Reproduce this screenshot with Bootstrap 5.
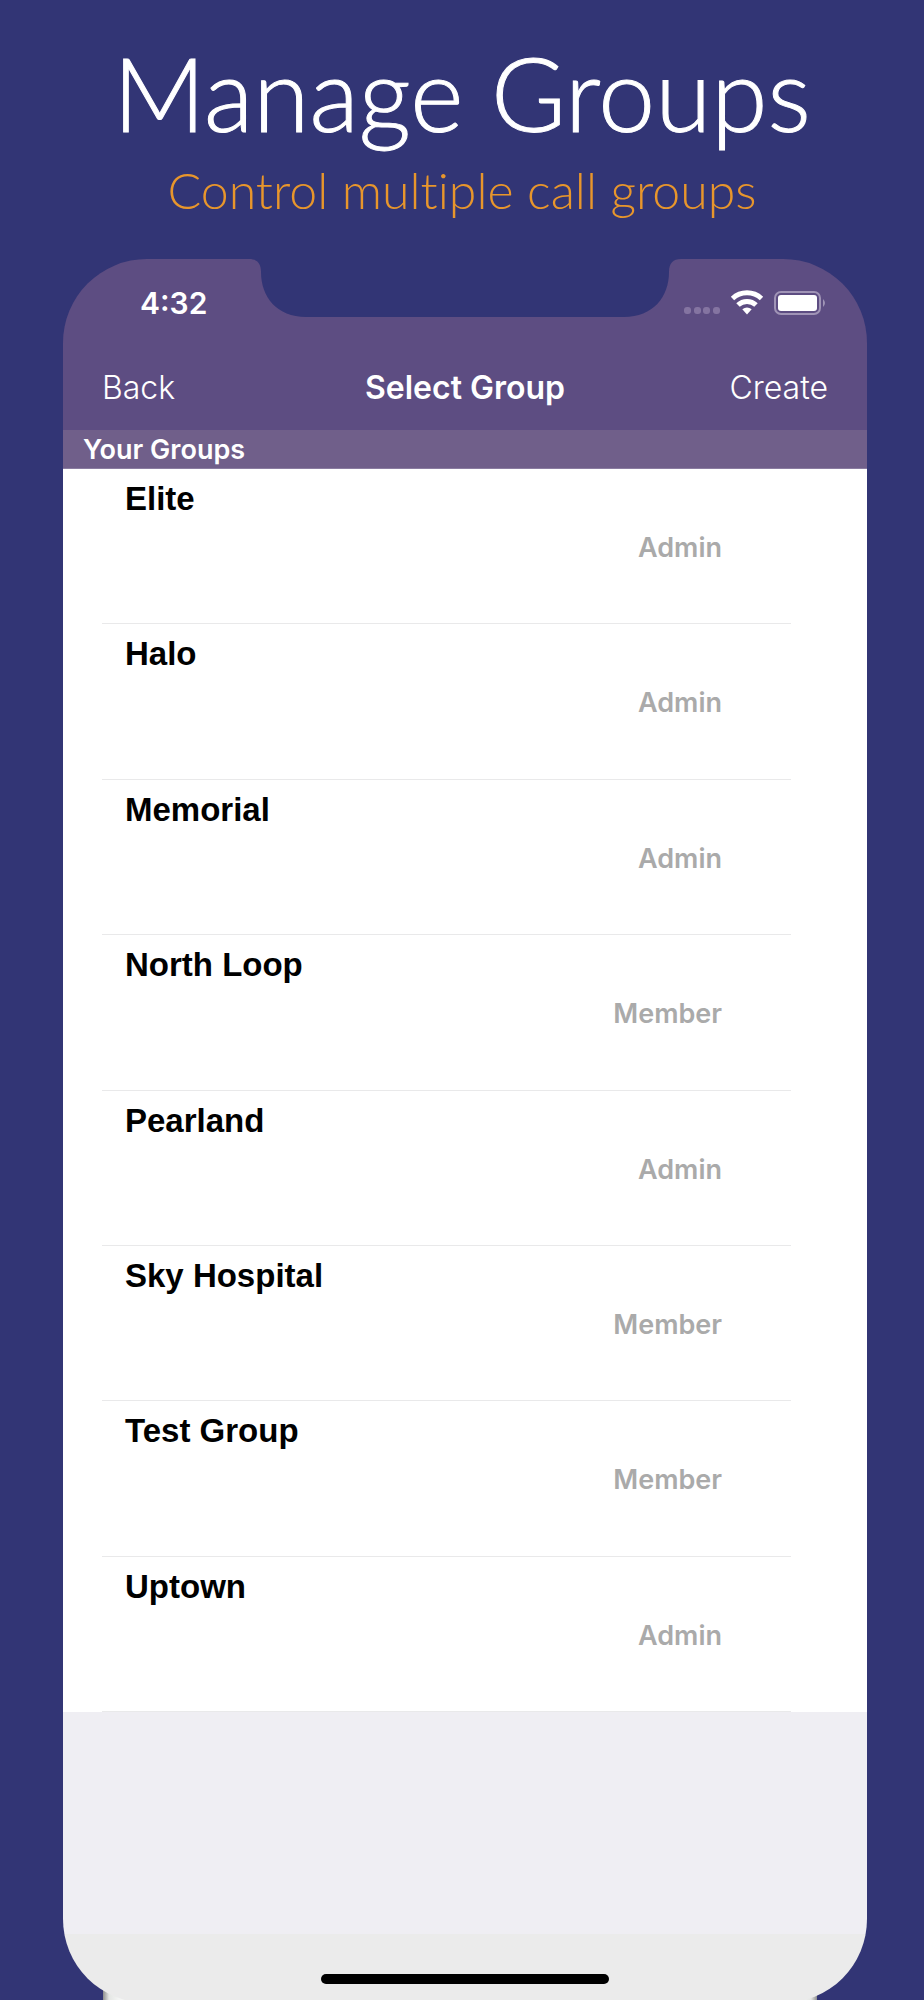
<!DOCTYPE html>
<html lang="en">
<head>
<meta charset="utf-8">
<meta name="viewport" content="width=device-width, initial-scale=1">
<title>Manage Groups</title>
<link href="https://cdn.jsdelivr.net/npm/bootstrap@5.3.0/dist/css/bootstrap.min.css" rel="stylesheet">
<style>
  body { background: #323575; font-family: Inter, "Liberation Sans", sans-serif; }
  .promo { padding-top: 29px; height: 259px; font-family: Lato, "Open Sans", sans-serif; font-weight: 300; font-variant-ligatures: none; }
  .promo h1 { font-size: 102px; line-height: 128px; font-weight: 300; color: #fff; -webkit-text-stroke: 1px #fff; }
  .promo p { font-size: 50px; line-height: 66px; color: #e8962c; }
  .stage { padding: 0 57px 0 63px; overflow: hidden; }
  .phone { border-radius: 84px; overflow: hidden; margin-bottom: -3px; }
  .phone-base { left: 103px; right: 107px; bottom: 0; height: 10px; background: linear-gradient(90deg, #8e8e8e, #e4e6e4 6px, #f4f5f4 16px, #f4f5f4 calc(100% - 16px), #e4e6e4 calc(100% - 6px), #8e8e8e); }
  .app-top { background: #5d4d82; color: #fff; }
  .notch { top: 0; left: 50%; transform: translateX(-50%); }
  .status { height: 88px; padding: 0 41px 0 77px; font-size: 30px; font-weight: 600; }
  .title-bar { height: 83px; padding: 0 39px 2px; }
  .title-bar .btn { font-size: 32px; line-height: 40px; color: #fff; font-weight: 300; }
  .title-bar h2 { font-size: 32px; line-height: 40px; font-weight: 600; }
  .section-label { background: #705f8a; color: #fff; font-size: 27px; line-height: 39px; font-weight: 600; padding-left: 20px; border-bottom: 1px solid #8a7ca0; height: 39px; }
  .groups { display: grid; grid-auto-rows: 1fr; min-height: 1243px; padding: 0 76px 0 39px; background: #fff; }
  .groups li { border-bottom: 1px solid #e9e9ea; padding: 10px 69px 0 23px; }
  .group-name { font-family: "Liberation Sans", Arial, sans-serif; font-size: 33px; line-height: 40px; font-weight: 700; color: #000; }
  .group-role { font-size: 27px; line-height: 32px; font-weight: 600; color: #aaa; margin-top: 13px; }
  .blank { height: 222px; background: #efeef3; }
  .home { height: 69px; background: #ebebeb; padding-top: 40px; }
  .home span { width: 288px; height: 10px; border-radius: 5px; background: #000; }
</style>
</head>
<body>
<header class="promo text-center">
  <h1 class="m-0">Manage Groups</h1>
  <p class="m-0">Control multiple call groups</p>
</header>
<main class="stage position-relative">
  <div class="phone-base position-absolute"></div>
  <div class="phone position-relative">
    <div class="app-top position-relative">
      <svg class="notch position-absolute" width="432" height="58" viewBox="0 0 432 58" aria-hidden="true"><path fill="#323575" d="M0 0C8 0 12 4 12 13C12 38 28 58 57 58H375C404 58 420 38 420 13C420 4 424 0 432 0Z"/></svg>
      <div class="status d-flex justify-content-between align-items-center">
        <span>4:32</span>
        <svg width="142" height="26" viewBox="0 0 142 26" aria-hidden="true">
          <g fill="#8474a1"><rect x="0" y="17" width="7" height="7" rx="3"/><rect x="10" y="17" width="7" height="7" rx="3"/><rect x="19" y="17" width="7" height="7" rx="3"/><rect x="29" y="17" width="7" height="7" rx="3"/></g>
          <g fill="none" stroke="#fff" stroke-width="5"><path d="M48.500 8.500A21.500 21.500 0 0 1 77.500 8.500"/><path d="M54 15A13 13 0 0 1 72 15"/></g>
          <path fill="#fff" d="M58.300 19.300Q63 15.700 67.700 19.300L63 24.500Z"/>
          <rect x="91" y="2" width="45" height="22" rx="6" fill="none" stroke="#a094b6" stroke-width="2"/>
          <rect x="94" y="5" width="39" height="16" rx="3" fill="#fff"/>
          <path fill="#a094b6" d="M139 9Q143 13 139 17Z"/>
        </svg>
      </div>
      <nav class="title-bar row g-0 align-items-center" aria-label="Groups">
        <div class="col"><button type="button" class="btn p-0 border-0">Back</button></div>
        <h2 class="col-auto m-0">Select Group</h2>
        <div class="col text-end"><button type="button" class="btn p-0 border-0">Create</button></div>
      </nav>
    </div>
    <h3 class="section-label m-0">Your Groups</h3>
    <ul class="groups list-unstyled m-0">
      <li><div class="group-name">Elite</div><div class="group-role text-end">Admin</div></li>
      <li><div class="group-name">Halo</div><div class="group-role text-end">Admin</div></li>
      <li><div class="group-name">Memorial</div><div class="group-role text-end">Admin</div></li>
      <li><div class="group-name">North Loop</div><div class="group-role text-end">Member</div></li>
      <li><div class="group-name">Pearland</div><div class="group-role text-end">Admin</div></li>
      <li><div class="group-name">Sky Hospital</div><div class="group-role text-end">Member</div></li>
      <li><div class="group-name">Test Group</div><div class="group-role text-end">Member</div></li>
      <li><div class="group-name">Uptown</div><div class="group-role text-end">Admin</div></li>
    </ul>
    <div class="blank"></div>
    <div class="home d-flex justify-content-center"><span></span></div>
  </div>
</main>
<script src="https://cdn.jsdelivr.net/npm/bootstrap@5.3.0/dist/js/bootstrap.bundle.min.js"></script>
</body>
</html>
